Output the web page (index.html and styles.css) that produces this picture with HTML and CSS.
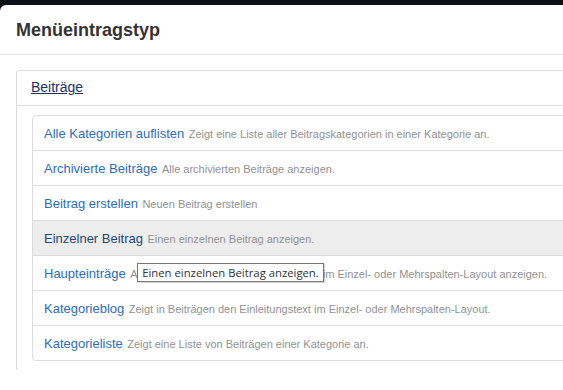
FILE: index.html
```html
<!DOCTYPE html>
<html lang="de">
<head>
<meta charset="utf-8">
<title>Menüeintragstyp</title>
<link rel="stylesheet" href="styles.css">
</head>
<body>
<div class="modal">
  <div class="modal-header">
    <h3 class="modal-title">Menüeintragstyp</h3>
  </div>
  <div class="modal-body">
    <div class="panel">
      <div class="panel-heading"><a class="panel-link" href="#">Beiträge</a></div>
      <div class="panel-body">
        <ul class="list">
          <li class="item"><a class="item-title" href="#">Alle Kategorien auflisten</a> <small class="item-desc">Zeigt eine Liste aller Beitragskategorien in einer Kategorie an.</small></li>
          <li class="item"><a class="item-title" href="#">Archivierte Beiträge</a> <small class="item-desc">Alle archivierten Beiträge anzeigen.</small></li>
          <li class="item"><a class="item-title" href="#">Beitrag erstellen</a> <small class="item-desc">Neuen Beitrag erstellen</small></li>
          <li class="item item-hover"><a class="item-title" href="#">Einzelner Beitrag</a> <small class="item-desc">Einen einzelnen Beitrag anzeigen.</small></li>
          <li class="item item-tip"><a class="item-title" href="#">Haupteinträge</a> <small class="item-desc">Alle Haupteinträge als Liste oder Blogs im Einzel- oder Mehrspalten-Layout anzeigen.</small><span class="tooltip">Einen einzelnen Beitrag anzeigen.</span></li>
          <li class="item"><a class="item-title" href="#">Kategorieblog</a> <small class="item-desc">Zeigt in Beiträgen den Einleitungstext im Einzel- oder Mehrspalten-Layout.</small></li>
          <li class="item"><a class="item-title" href="#">Kategorieliste</a> <small class="item-desc">Zeigt eine Liste von Beiträgen einer Kategorie an.</small></li>
        </ul>
      </div>
    </div>
  </div>
</div>
</body>
</html>
```

FILE: styles.css
```css
html, body {
  margin: 0;
  padding: 0;
  height: 100%;
  overflow: hidden;
}
body {
  background: #0b0f18;
  font-family: "Liberation Sans", Arial, sans-serif;
  color: #333;
}
.modal {
  margin-top: 5px;
  width: 620px;
  height: 400px;
  background: #fff;
  border-radius: 6px 6px 0 0;
}
.modal-header {
  padding: 15px 16px 14px;
  border-bottom: 1px solid #e5e5e5;
}
.modal-title {
  margin: 0;
  font-size: 18px;
  line-height: 20px;
  font-weight: bold;
  color: #333;
}
.modal-body {
  padding: 15px 0 0 16px;
}
.panel {
  border: 1px solid #ddd;
  border-bottom: 0;
  border-radius: 4px 4px 0 0;
}
.panel-heading {
  padding: 6px 14px 8px;
  line-height: 20px;
  border-bottom: 1px solid #ddd;
}
.panel-link {
  font-size: 14px;
  color: #1f3560;
  text-decoration: underline;
}
.panel-body {
  padding: 9px 0 9px 15px;
}
.list {
  list-style: none;
  margin: 0;
  padding: 0;
  border: 1px solid #ddd;
  border-radius: 4px;
}
.item {
  position: relative;
  height: 20px;
  padding: 7px 11px;
  line-height: 20px;
  white-space: nowrap;
  border-top: 1px solid #ddd;
}
.item:first-child {
  border-top: 0;
}
.item-title {
  font-size: 13px;
  color: #2f6db5;
  text-decoration: none;
}
.item-desc {
  font-size: 11px;
  line-height: 1;
  color: #929292;
}
.item-hover {
  background: #ededed;
}
.item-hover .item-title {
  color: #1f4878;
}
.tooltip {
  position: absolute;
  left: 104px;
  top: 7px;
  width: 185px;
  height: 17px;
  border: 1px solid #767676;
  background: #fff;
  font-family: "Open Sans", "DejaVu Sans", sans-serif;
  font-size: 11.3px;
  line-height: 17px;
  color: #333;
  text-align: center;
  box-shadow: 1px 1px 1px rgba(0,0,0,0.15);
}
```
